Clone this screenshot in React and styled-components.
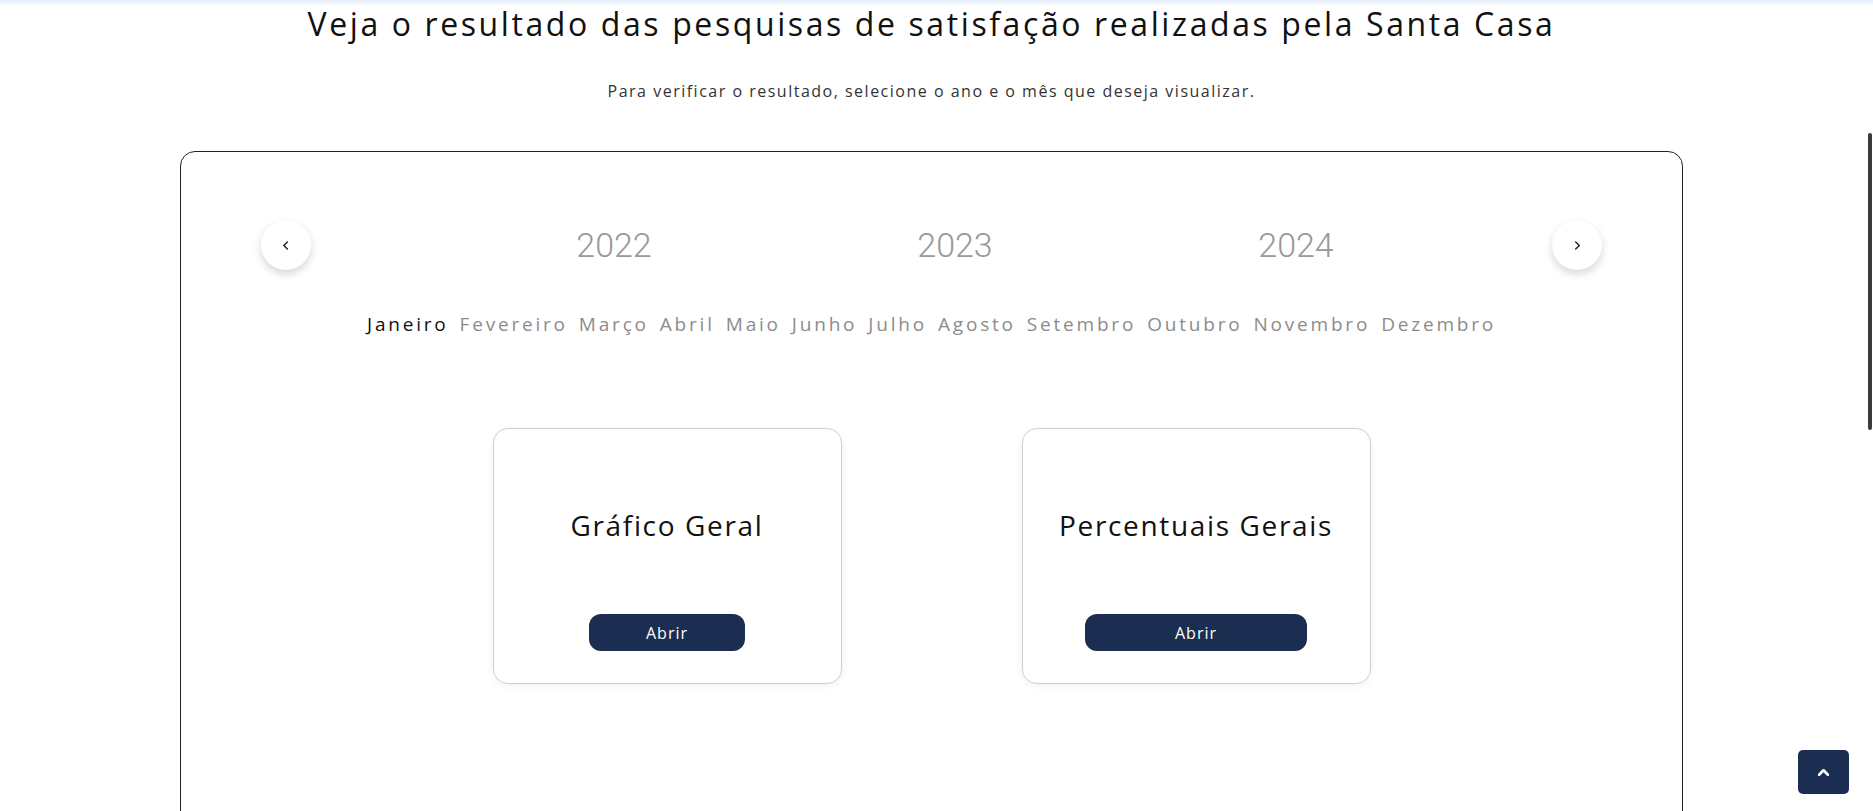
import React, { useState } from 'react'
import styled, { createGlobalStyle } from 'styled-components'

const GlobalStyle = createGlobalStyle`
  html, body {
    margin: 0;
    overflow: hidden;
  }
  body {
    background: linear-gradient(#e2ecf9 0, #ffffff 6px) no-repeat, #ffffff;
    font-family: "Open Sans", "Noto Sans", sans-serif;
    color: #111;
  }
`

const Page = styled.div`
  width: calc(100% - 10px);
  display: flex;
  flex-direction: column;
  align-items: center;
`

const Title = styled.h1`
  margin: 0;
  padding-top: 4px;
  font-size: 32px;
  line-height: 40px;
  font-weight: 400;
  letter-spacing: 2.6px;
  white-space: nowrap;
  color: #111;
`

const Subtitle = styled.p`
  margin: 37px 0 0;
  font-size: 16px;
  line-height: 20px;
  letter-spacing: 1.5px;
  color: #333;
`

const Panel = styled.section`
  box-sizing: border-box;
  width: 100%;
  max-width: 1503px;
  min-height: 760px;
  margin-top: 50px;
  padding: 68px 80px 0;
  border: 1px solid #222;
  border-radius: 15px;
  display: flex;
  flex-direction: column;
  align-items: center;
`

const Carousel = styled.div`
  width: 100%;
  display: flex;
  align-items: center;
`

const Arrow = styled.button`
  flex: 0 0 50px;
  width: 50px;
  height: 50px;
  padding: 0;
  border: none;
  border-radius: 50%;
  background: #fff;
  box-shadow: 0 4px 9px rgba(0, 0, 0, 0.16);
  display: flex;
  align-items: center;
  justify-content: center;
  cursor: pointer;
`

const Track = styled.div`
  flex: 1;
  display: grid;
  grid-template-columns: repeat(3, 341px);
  justify-content: center;
  padding-left: 47px;
`

const Year = styled.span`
  text-align: center;
  font-family: Roboto, "Open Sans", sans-serif;
  font-weight: 300;
  font-size: 34px;
  line-height: 50px;
  color: #999;
`

const Months = styled.nav`
  margin-top: 42px;
  display: flex;
  gap: 11px;
`

const Month = styled.span`
  font-size: 19px;
  line-height: 24px;
  letter-spacing: 2.8px;
  font-weight: 400;
  color: ${p => (p.$active ? '#111' : '#8c8c8c')};
  cursor: pointer;
`

const Cards = styled.div`
  margin-top: 92px;
  display: flex;
  gap: 180px;
`

const Card = styled.div`
  box-sizing: border-box;
  width: 349px;
  height: 256px;
  padding: 78px 20px 32px;
  border: 1px solid #cfcfcf;
  border-radius: 15px;
  box-shadow: 0 2px 6px rgba(0, 0, 0, 0.06);
  display: flex;
  justify-content: center;
`

const CardBody = styled.div`
  display: inline-flex;
  flex-direction: column;
  align-items: center;
`

const CardTitle = styled.h2`
  margin: 0;
  font-size: 28px;
  line-height: 36px;
  font-weight: 500;
  letter-spacing: 1.65px;
  white-space: nowrap;
  color: #111;
`

const OpenButton = styled.button`
  margin-top: 71px;
  width: 81%;
  height: 37px;
  border: none;
  border-radius: 12px;
  background: #1b2d50;
  color: #fff;
  font-family: "Open Sans", sans-serif;
  font-size: 16px;
  font-weight: 500;
  letter-spacing: 1px;
  cursor: pointer;
`

const ToTop = styled.button`
  position: fixed;
  right: 24px;
  bottom: 17px;
  width: 51px;
  height: 44px;
  border: none;
  border-radius: 5px;
  background: #1b2d50;
  display: flex;
  align-items: center;
  justify-content: center;
`

const ScrollThumb = styled.div`
  position: fixed;
  right: 1px;
  top: 133px;
  width: 4px;
  height: 297px;
  border-radius: 2px;
  background: #3b3b3b;
`

const Chevron = ({ dir, color = '#222', size = 9, width = 1.6 }) => {
  const paths = {
    left: 'M6 1 L2 5 L6 9',
    right: 'M3 1 L7 5 L3 9',
    up: 'M1 7 L5 3 L9 7',
  }
  return (
    <svg width={size} height={size} viewBox="0 0 10 10" fill="none">
      <path d={paths[dir]} stroke={color} strokeWidth={width} strokeLinecap="round" strokeLinejoin="round" />
    </svg>
  )
}

const years = ['2022', '2023', '2024']
const months = ['Janeiro', 'Fevereiro', 'Março', 'Abril', 'Maio', 'Junho', 'Julho', 'Agosto', 'Setembro', 'Outubro', 'Novembro', 'Dezembro']
const reports = ['Gráfico Geral', 'Percentuais Gerais']

export default function App() {
  const [month, setMonth] = useState('Janeiro')

  return (
    <>
      <GlobalStyle />
      <Page>
        <Title>Veja o resultado das pesquisas de satisfação realizadas pela Santa Casa</Title>
        <Subtitle>Para verificar o resultado, selecione o ano e o mês que deseja visualizar.</Subtitle>
        <Panel>
          <Carousel>
            <Arrow aria-label="anterior"><Chevron dir="left" /></Arrow>
            <Track>
              {years.map(y => <Year key={y}>{y}</Year>)}
            </Track>
            <Arrow aria-label="próximo"><Chevron dir="right" /></Arrow>
          </Carousel>
          <Months>
            {months.map(m => (
              <Month key={m} $active={m === month} onClick={() => setMonth(m)}>{m}</Month>
            ))}
          </Months>
          <Cards>
            {reports.map(r => (
              <Card key={r}>
                <CardBody>
                  <CardTitle>{r}</CardTitle>
                  <OpenButton>Abrir</OpenButton>
                </CardBody>
              </Card>
            ))}
          </Cards>
        </Panel>
      </Page>
      <ToTop aria-label="topo"><Chevron dir="up" color="#fff" size={11} width={2.4} /></ToTop>
      <ScrollThumb />
    </>
  )
}
